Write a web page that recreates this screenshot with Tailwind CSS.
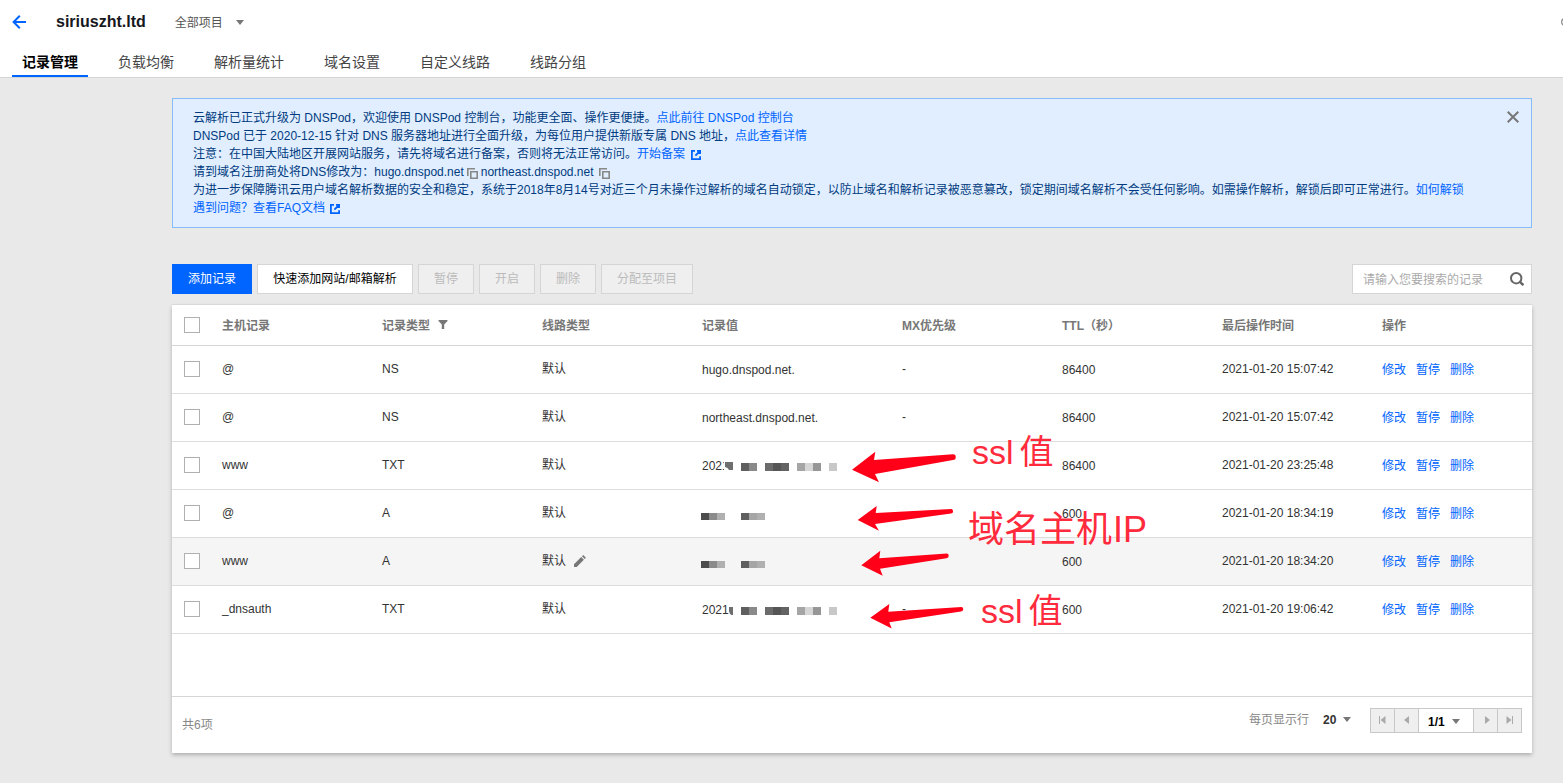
<!DOCTYPE html>
<html lang="zh-CN">
<head>
<meta charset="utf-8">
<meta name="viewport" content="width=device-width, initial-scale=1">
<title>siriuszht.ltd - 记录管理</title>
<script src="https://cdn.jsdelivr.net/npm/@tailwindcss/browser@4"></script>
</head>
<body class="min-h-screen bg-[#e9e9e9] font-['Liberation_Sans','Noto_Sans_CJK_SC',sans-serif] text-xs text-[#333]">
<svg class="hidden" aria-hidden="true">
  <symbol id="caret" viewBox="0 0 8 5"><path d="M0 0h8L4 5z" fill="#777"/></symbol>
  <symbol id="ext" viewBox="0 0 10 10"><path d="M4 .9H.9v8.200h8.200V6.200M6 .9h3.100V4M9 1 4.400 5.600" fill="none" stroke="#0064ff" stroke-width="1.8"/></symbol>
  <symbol id="copy" viewBox="0 0 11 11"><path d="M.8 8V.8H8M3.800 3.800h6.400v6.400H3.800z" fill="none" stroke="#888" stroke-width="1.6"/></symbol>
  <symbol id="mosaic-long" viewBox="0 0 96 8">
    <path d="M0 0h8v8H0z" fill="#5f5f5f"/><path d="M8 0h8v8H8z" fill="#8a8a8a"/>
    <path d="M24 0h8v8h-8z" fill="#6b6b6b"/><path d="M32 0h8v8h-8z" fill="#555"/><path d="M40 0h8v8h-8z" fill="#636363"/>
    <path d="M56 0h8v8h-8z" fill="#a5a5a5"/><path d="M64 0h8v8h-8z" fill="#d6d6d6"/><path d="M72 0h8v8h-8z" fill="#969696"/><path d="M88 0h8v8h-8z" fill="#c8c8c8"/>
  </symbol>
  <symbol id="mosaic-short" viewBox="0 0 64 7">
    <path d="M0 0h8v7H0z" fill="#4c4c4c"/><path d="M8 0h8v7H8z" fill="#8b8b8b"/><path d="M16 0h8v7h-8z" fill="#b0b0b0"/>
    <path d="M40 0h8v7h-8z" fill="#5f5f5f"/><path d="M48 0h8v7h-8z" fill="#a6a6a6"/><path d="M56 0h8v7h-8z" fill="#b0b0b0"/>
  </symbol>
</svg>

<header class="border-b border-[#d5d5d5] bg-white">
  <div class="flex h-12 items-center pb-1 pl-3">
    <a href="#" aria-label="返回" class="block pb-px"><svg class="h-[14px] w-[14px]" viewBox="0 0 14 14" fill="none" stroke="#0064ff" stroke-width="2"><path d="M14 7H1.8M7.800.8 1.600 7l6.200 6.200"/></svg></a>
    <h1 class="ml-[30px] text-base font-bold text-[#16181d]">siriuszht.ltd</h1>
    <div class="ml-[29px] grid items-center">
      <select aria-label="项目" class="col-start-1 row-start-1 w-[69px] appearance-none bg-transparent pt-px text-[#555]"><option>全部项目</option></select>
      <svg class="pointer-events-none col-start-1 row-start-1 h-[5px] w-2 justify-self-end"><use href="#caret"/></svg>
    </div>
    <svg class="ml-auto h-2 w-[2px]" viewBox="0 0 2 8" fill="none" stroke="#888" stroke-width="1.2"><circle cx="4" cy="4" r="3.4"/></svg>
  </div>
  <nav class="flex h-[29px] gap-5 pl-3 text-sm text-[#444]">
    <a href="#" class="flex items-center border-b-2 border-[#0064ff] px-[10px] font-bold text-black">记录管理</a>
    <a href="#" class="flex items-center border-b-2 border-transparent px-[10px]">负载均衡</a>
    <a href="#" class="flex items-center border-b-2 border-transparent px-[10px]">解析量统计</a>
    <a href="#" class="flex items-center border-b-2 border-transparent px-[10px]">域名设置</a>
    <a href="#" class="flex items-center border-b-2 border-transparent px-[10px]">自定义线路</a>
    <a href="#" class="flex items-center border-b-2 border-transparent px-[10px]">线路分组</a>
  </nav>
</header>

<main class="pt-5 pr-[31px] pb-[30px] pl-[172px]">
  <section class="flex items-start justify-between border border-[#86bdf8] bg-[#e0eeff] py-[10px] pr-3 pl-5 leading-[18px] text-[#003b80]">
    <div>
      <p>云解析已正式升级为 DNSPod，欢迎使用 DNSPod 控制台，功能更全面、操作更便捷。<a href="#" class="text-[#0064ff]">点此前往 DNSPod 控制台</a></p>
      <p>DNSPod 已于 2020-12-15 针对 DNS 服务器地址进行全面升级，为每位用户提供新版专属 DNS 地址，<a href="#" class="text-[#0064ff]">点此查看详情</a></p>
      <p class="flex items-center">注意：在中国大陆地区开展网站服务，请先将域名进行备案，否则将无法正常访问。<a href="#" class="flex items-center gap-[6px] text-[#0064ff]">开始备案<svg class="mt-px h-[10px] w-[10px]"><use href="#ext"/></svg></a></p>
      <p class="flex items-center">请到域名注册商处将DNS修改为：<span>hugo.dnspod.net</span><button aria-label="复制 hugo.dnspod.net" class="mt-[3px] ml-[3px]"><svg class="block h-[11px] w-[11px]"><use href="#copy"/></svg></button><span class="ml-[3px]">northeast.dnspod.net</span><button aria-label="复制 northeast.dnspod.net" class="mt-[3px] ml-[5px]"><svg class="block h-[11px] w-[11px]"><use href="#copy"/></svg></button></p>
      <p>为进一步保障腾讯云用户域名解析数据的安全和稳定，系统于2018年8月14号对近三个月未操作过解析的域名自动锁定，以防止域名和解析记录被恶意篡改，锁定期间域名解析不会受任何影响。如需操作解析，解锁后即可正常进行。<a href="#" class="text-[#0064ff]">如何解锁</a></p>
      <p><a href="#" class="flex items-center gap-[5px] text-[#0064ff]">遇到问题？查看FAQ文档<svg class="mt-px h-[10px] w-[10px]"><use href="#ext"/></svg></a></p>
    </div>
    <button aria-label="关闭" class="mt-[2px]"><svg class="block h-3 w-3" viewBox="0 0 12 12" stroke="#777" stroke-width="2"><path d="M.7.7l10.600 10.600M11.300.7.7 11.300"/></svg></button>
  </section>

  <div class="mt-9 flex h-[30px] gap-[5px]">
    <button class="bg-[#0064ff] px-4 text-white">添加记录</button>
    <button class="min-w-[156px] border border-[#d5d5d5] bg-white px-[15px] text-black">快速添加网站/邮箱解析</button>
    <button disabled class="border border-[#d5d5d5] bg-[#efefef] px-[15px] text-[#bbb]">暂停</button>
    <button disabled class="border border-[#d5d5d5] bg-[#efefef] px-[15px] text-[#bbb]">开启</button>
    <button disabled class="border border-[#d5d5d5] bg-[#efefef] px-[15px] text-[#bbb]">删除</button>
    <button disabled class="border border-[#d5d5d5] bg-[#efefef] px-[15px] text-[#bbb]">分配至项目</button>
    <form class="ml-auto flex w-[180px] items-center border border-[#d5d5d5] bg-white pr-[7px] pl-[10px]">
      <input type="text" aria-label="搜索记录" placeholder="请输入您要搜索的记录" class="min-w-0 flex-1 pt-px outline-none placeholder:text-[#aaa]">
      <button type="button" aria-label="搜索"><svg class="block h-[14px] w-[14px]" viewBox="0 0 14 14" fill="none" stroke="#666" stroke-width="2"><circle cx="6.2" cy="6.2" r="5.2"/><path d="M9.600 9.600l3.800 3.600" stroke-width="2.4"/></svg></button>
    </form>
  </div>

  <section class="relative mt-[11px] bg-white shadow-[0_-1px_0_#d9d9d9,0_2px_4px_rgba(0,0,0,0.25)]">
    <table class="w-full table-fixed text-left">
      <colgroup><col class="w-[40px]"><col class="w-[160px]"><col class="w-[160px]"><col class="w-[160px]"><col class="w-[200px]"><col class="w-[160px]"><col class="w-[160px]"><col class="w-[160px]"><col class="w-[160px]"></colgroup>
      <thead>
        <tr class="h-10 border-b border-[#d5d5d5] text-[#777]">
          <th class="pl-3"><input type="checkbox" aria-label="全选" class="block h-4 w-4 appearance-none border border-[#b0b0b0] bg-white"></th>
          <th class="px-[10px] pt-[3px]">主机记录</th>
          <th class="px-[10px] pt-[3px]"><div class="flex items-center gap-2">记录类型<button aria-label="筛选" class="pb-[3px]"><svg class="block h-[9px] w-[10px]" viewBox="0 0 10 9" fill="#777"><path d="M.5 0h9v1L6.200 4.500V9H3.800V4.500L.5 1z"/></svg></button></div></th>
          <th class="px-[10px] pt-[3px]">线路类型</th>
          <th class="px-[10px] pt-[3px]">记录值</th>
          <th class="px-[10px] pt-[3px]">MX优先级</th>
          <th class="px-[10px] pt-[3px]">TTL（秒）</th>
          <th class="px-[10px] pt-[3px]">最后操作时间</th>
          <th class="px-[10px] pt-[3px]">操作</th>
        </tr>
      </thead>
      <tbody id="records"></tbody>
    </table>
    <div class="h-[62px]"></div>
    <footer class="flex h-[57px] justify-between border-t border-[#d5d5d5] px-[10px] text-[#888]">
      <p class="self-center">共6项</p>
      <div class="flex items-start pt-[11px]">
        <label for="size" class="leading-6">每页显示行</label>
        <div class="ml-[14px] grid items-center">
          <select id="size" class="col-start-1 row-start-1 h-6 w-7 appearance-none bg-transparent font-bold text-[#333]"><option>20</option></select>
          <svg class="pointer-events-none col-start-1 row-start-1 h-[5px] w-2 justify-self-end"><use href="#caret"/></svg>
        </div>
        <div class="ml-[19px] flex h-[25px] border border-[#c8c8c8] bg-[#efefef]">
          <button disabled aria-label="首页" class="flex w-6 items-center justify-center border-r border-[#c8c8c8]"><svg class="h-2 w-[7px]" viewBox="0 0 7 8" fill="#aaa"><path d="M0 0h1v8H0zM6.500 0v8L1.500 4z"/></svg></button>
          <button disabled aria-label="上一页" class="flex w-6 items-center justify-center border-r border-[#c8c8c8]"><svg class="h-2 w-[5px]" viewBox="0 0 5 8" fill="#aaa"><path d="M5 0v8L0 4z"/></svg></button>
          <div class="grid w-[54px] items-center bg-white">
            <select aria-label="页码" class="col-start-1 row-start-1 h-full w-full appearance-none bg-transparent pt-[3px] pl-[9px] font-bold text-black"><option>1/1</option></select>
            <svg class="pointer-events-none col-start-1 row-start-1 mt-[3px] mr-[13px] h-[5px] w-2 justify-self-end"><use href="#caret"/></svg>
          </div>
          <button disabled aria-label="下一页" class="flex w-6 items-center justify-center border-l border-[#c8c8c8]"><svg class="ml-1 h-2 w-[5px]" viewBox="0 0 5 8" fill="#aaa"><path d="M0 0v8l5-4z"/></svg></button>
          <button disabled aria-label="末页" class="flex w-6 items-center justify-center border-l border-[#c8c8c8]"><svg class="h-2 w-[7px]" viewBox="0 0 7 8" fill="#aaa"><path d="M6 0h1v8H6zM.5 0v8l5-4z"/></svg></button>
        </div>
      </div>
    </footer>

    <!-- hand-made annotations lying over the table -->
    <div class="pointer-events-none absolute inset-0 text-[34px] leading-[40px] whitespace-nowrap text-[#ff2b3c]">
      <svg class="absolute top-[146px] left-[680px] h-[178px] w-[112px]" viewBox="852 451 112 178" fill="#ff0018">
        <path d="M852 469.700 875.300 451.700 874 460 953 454.300Q956 454.500 955.700 457.300 956 459.800 953 460L875 474 879 482.300z"/>
        <path d="M857.700 520 876.700 506 875.700 513 951.500 509Q953.300 509.500 953 511.700 953 513.300 951 513.600L875 524 879 530.700z"/>
        <path d="M861.300 565.300 880.300 550.700 879.300 558.300 947 553.500Q948.900 554 948.700 555.700 948.600 557.700 946.500 558.200L880 568.700 882.700 575.700z"/>
        <path d="M870.300 617.700 889.300 604 888.300 611.700 961.500 607Q963.500 607.300 963.300 609.300 963.200 611.200 961 611.600L889.300 622.300 891.700 628.500z"/>
      </svg>
      <p class="absolute top-[127px] left-[800px] flex items-baseline gap-[6px]"><span>ssl</span><span>值</span></p>
      <p class="absolute top-[205px] left-[796px] flex items-baseline gap-px text-[36px]"><span>域名主机</span><span>IP</span></p>
      <p class="absolute top-[286px] left-[809px] flex items-baseline gap-[6px]"><span>ssl</span><span>值</span></p>
    </div>
  </section>
</main>

<script>
const longMask = '<svg class="mt-[2px] ml-2 h-2 w-24"><use href="#mosaic-long"/></svg>';
const wideCap = '<svg class="mt-px -ml-[5px] h-[10px] w-[9px]" viewBox="0 0 9 10"><path d="M0 0h9v10H0z" fill="#fff"/><path d="M1 1h8v8H5Q4 6.500 1 6z" fill="#6e6e6e"/></svg>';
const narrowCap = '<svg class="mt-[2px] h-2 w-1" viewBox="0 0 4 8"><path d="M0 0h4v8H2.500Q0 7 0 3z" fill="#6e6e6e"/></svg>';
const shortMask = '<svg class="mt-[5px] -ml-px h-[7px] w-16"><use href="#mosaic-short"/></svg>';
const records = [
  ['@', 'NS', 'hugo.dnspod.net.', '86400', '2021-01-20 15:07:42'],
  ['@', 'NS', 'northeast.dnspod.net.', '86400', '2021-01-20 15:07:42'],
  ['www', 'TXT', '2021' + wideCap + longMask, '86400', '2021-01-20 23:25:48'],
  ['@', 'A', shortMask, '600', '2021-01-20 18:34:19'],
  ['www', 'A', shortMask, '600', '2021-01-20 18:34:20', true],
  ['_dnsauth', 'TXT', '2021' + narrowCap + longMask, '600', '2021-01-20 19:06:42'],
];
const pencil = '<button aria-label="编辑线路"><svg class="block h-[12px] w-[12px]" viewBox="0 0 12 12" fill="#777"><path d="M0 12V9.300L7.200 2.100 9.900 4.800 2.700 12zM8 1.300 9.200.1 11.900 2.800 10.700 4z"/></svg></button>';
document.getElementById('records').innerHTML = records.map(([host, type, value, ttl, time, active]) => `
  <tr class="h-12 border-b border-[#ddd] ${active ? 'bg-[#f5f5f5]' : ''}">
    <td class="pl-3"><input type="checkbox" aria-label="选择 ${host} ${type}" class="block h-4 w-4 appearance-none border border-[#b0b0b0] bg-white"></td>
    <td class="px-[10px]">${host}</td>
    <td class="px-[10px]">${type}</td>
    <td class="px-[10px]"><div class="flex items-center gap-2">默认${active ? pencil : ''}</div></td>
    <td class="px-[10px]"><div class="flex items-center pt-px">${value}</div></td>
    <td class="px-[10px]">-</td>
    <td class="px-[10px] pt-px">${ttl}</td>
    <td class="px-[10px]">${time}</td>
    <td class="px-[10px] pt-px"><div class="flex gap-[10px] text-[#0064ff]"><a href="#">修改</a><a href="#">暂停</a><a href="#">删除</a></div></td>
  </tr>`).join('');
</script>
</body>
</html>
